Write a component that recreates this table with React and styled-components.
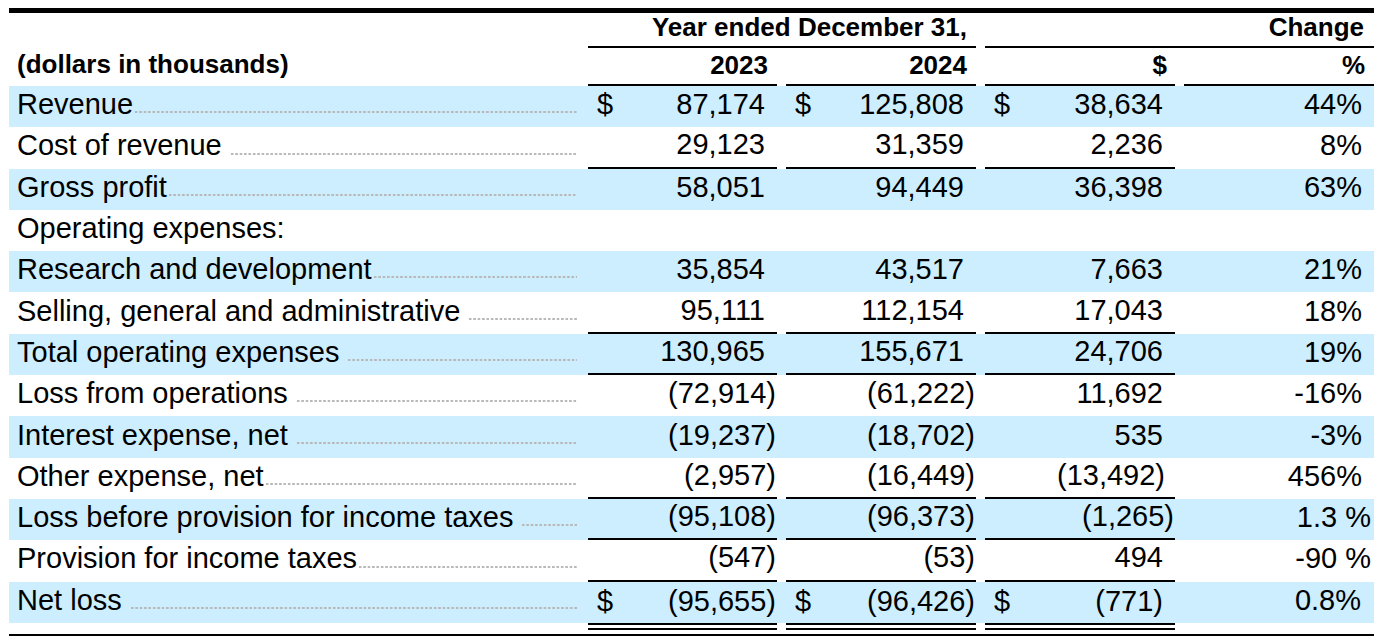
import React from 'react';
import styled, { createGlobalStyle } from 'styled-components';

const GlobalStyle = createGlobalStyle`
    body {
        margin: 0;
        background: #ffffff;
        font-family: "Liberation Sans", Arial, sans-serif;
        color: #000000;
    }
`;

const columns = '570px 189px 190px 190px 190px';

const rows = [
    { label: 'Revenue', blue: true, dollar: true, a: '87,174', b: '125,808', c: '38,634', d: '44%' },
    { label: 'Cost of revenue', spaced: true, a: '29,123', b: '31,359', c: '2,236', d: '8%', rule: true },
    { label: 'Gross profit', blue: true, a: '58,051', b: '94,449', c: '36,398', d: '63%' },
    { label: 'Operating expenses:', noDots: true },
    { label: 'Research and development', blue: true, a: '35,854', b: '43,517', c: '7,663', d: '21%' },
    { label: 'Selling, general and administrative', spaced: true, a: '95,111', b: '112,154', c: '17,043', d: '18%', rule: true },
    { label: 'Total operating expenses', spaced: true, blue: true, a: '130,965', b: '155,671', c: '24,706', d: '19%', rule: true },
    { label: 'Loss from operations', spaced: true, a: '(72,914)', b: '(61,222)', c: '11,692', d: '-16%' },
    { label: 'Interest expense, net', spaced: true, blue: true, a: '(19,237)', b: '(18,702)', c: '535', d: '-3%' },
    { label: 'Other expense, net', a: '(2,957)', b: '(16,449)', c: '(13,492)', cPad: 10, d: '456%', rule: true },
    { label: 'Loss before provision for income taxes', spaced: true, blue: true, a: '(95,108)', b: '(96,373)', c: '(1,265)', d: '1.3 %', dPad: 3, rule: true },
    { label: 'Provision for income taxes', a: '(547)', b: '(53)', c: '494', d: '-90 %', dPad: 3, rule: true },
    { label: 'Net loss', spaced: true, blue: true, dollar: true, a: '(95,655)', b: '(96,426)', c: '(771)', cPad: 12, d: '0.8%', dPad: 13, total: true },
];

// closing paren hangs into the right padding, like the filing does
const padFor = (value, override) => {
    if (override !== undefined) return override;
    return value && value.endsWith(')') ? 1 : 12;
};

const Amount = ({ value, dollar, rule, total, pad }) => (
    <NumCell $rule={rule} $total={total}>
        <Dollar>{dollar ? '$' : ''}</Dollar>
        <Figure style={{ paddingRight: padFor(value, pad) }}>{value}</Figure>
    </NumCell>
);

const App = () => {
    return (
        <Page>
            <GlobalStyle />
            <Statement>
                <HeadRow $top>
                    <span />
                    <GroupHead $span={2} $pad={9}>Year ended December 31,</GroupHead>
                    <GroupHead $span={2} $pad={10}>Change</GroupHead>
                </HeadRow>
                <HeadRow>
                    <UnitsLabel>(dollars in thousands)</UnitsLabel>
                    <ColHead $pad={9}>2023</ColHead>
                    <ColHead $pad={9}>2024</ColHead>
                    <ColHead $pad={8}>$</ColHead>
                    <ColHead $pad={9}>%</ColHead>
                </HeadRow>
                {rows.map(row =>
                    <Row key={row.label} $blue={row.blue}>
                        <LabelCell>
                            <LabelText>{row.label}</LabelText>
                            {!row.noDots && <Leader $spaced={row.spaced} />}
                        </LabelCell>
                        <Amount value={row.a} dollar={row.dollar} rule={row.rule} total={row.total} />
                        <Amount value={row.b} dollar={row.dollar} rule={row.rule} total={row.total} />
                        <Amount value={row.c} dollar={row.dollar} rule={row.rule} total={row.total} pad={row.cPad} />
                        <PctCell>
                            <Figure style={{ paddingRight: row.dPad !== undefined ? row.dPad : 12 }}>{row.d}</Figure>
                        </PctCell>
                    </Row>
                )}
                <BottomRule />
            </Statement>
        </Page>
    );
};

const Page = styled.div`
    padding: 8px 0 0 9px;
`;

const Statement = styled.div`
    width: 1365px;
    border-top: 5px solid #000;
    font-size: 29px;
`;

const BaseRow = styled.div`
    display: grid;
    grid-template-columns: ${columns};
    column-gap: 9px;
`;

const HeadRow = styled(BaseRow)`
    height: ${props => props.$top ? '35px' : '38px'};
    font-size: 26px;
    line-height: 28px;
    font-weight: bold;
`;

const GroupHead = styled.div`
    grid-column: span ${props => props.$span};
    text-align: right;
    padding-right: ${props => props.$pad}px;
    border-bottom: 2px solid #000;
`;

const ColHead = styled.div`
    text-align: right;
    padding-top: 3px;
    padding-right: ${props => props.$pad}px;
    border-bottom: 2px solid #000;
`;

const UnitsLabel = styled.div`
    padding: 2px 0 0 8px;
`;

const Row = styled(BaseRow)`
    height: 41.3px;
    background: ${props => props.$blue ? '#cceeff' : 'transparent'};
`;

const LabelCell = styled.div`
    display: flex;
    align-items: center;
    padding: 0 2px 4px 8px;
    white-space: nowrap;
`;

const LabelText = styled.span``;

const Leader = styled.span`
    flex: 1;
    align-self: flex-end;
    height: 4px;
    margin: 0 0 9px ${props => props.$spaced ? '8px' : '1px'};
    background-image: radial-gradient(circle, #b8b8b8 1px, transparent 1.3px);
    background-size: 4.4px 4px;
    background-repeat: repeat-x;
`;

const NumCell = styled.div`
    display: flex;
    align-items: center;
    justify-content: space-between;
    padding-bottom: 4px;
    box-sizing: border-box;
    border-bottom: ${props => props.$total ? '7px double #000' : props.$rule ? '2px solid #000' : 'none'};
    margin-bottom: ${props => props.$total ? '-7px' : '0'};
    height: ${props => props.$total ? 'calc(100% + 7px)' : 'auto'};
    padding-top: ${props => props.$total ? '3px' : '0'};
`;

const Dollar = styled.span`
    padding-left: 9px;
`;

const Figure = styled.span`
    white-space: pre;
`;

const PctCell = styled.div`
    display: flex;
    align-items: center;
    justify-content: flex-end;
    padding-bottom: 4px;
`;

const BottomRule = styled.div`
    margin-top: 11px;
    border-top: 2px solid #000;
`;

export default App;
